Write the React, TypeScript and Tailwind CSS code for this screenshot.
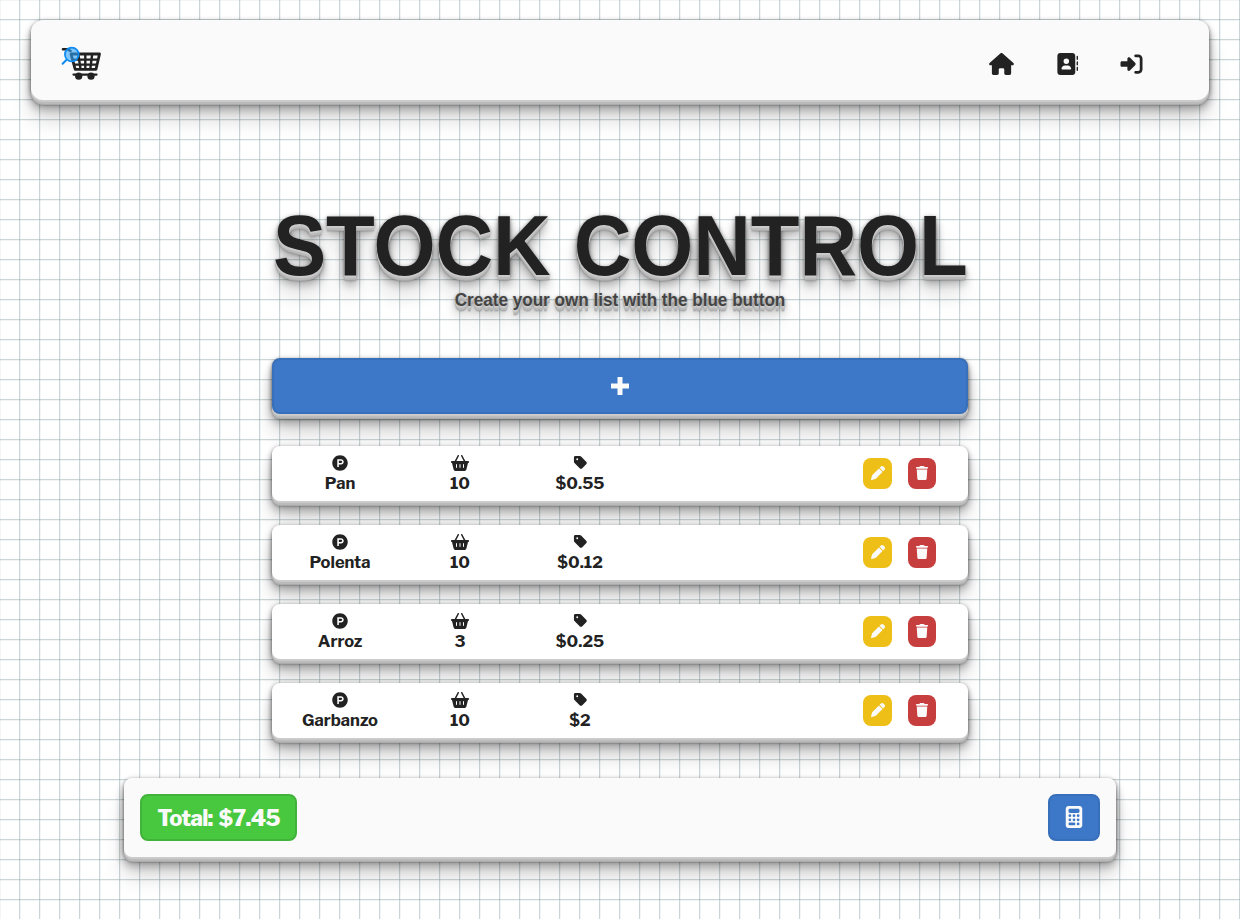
import type { ReactNode } from "react";
import {
  FaHouse,
  FaAddressBook,
  FaRightToBracket,
  FaProductHunt,
  FaBasketShopping,
  FaTag,
  FaPen,
  FaTrash,
  FaCalculator,
} from "react-icons/fa6";

const raised =
  "shadow-[0_1px_0_#ccc,0_2px_0_#c9c9c9,0_3px_0_#bbb,0_4px_0_#b9b9b9,0_5px_0_#aaa,0_6px_1px_rgba(0,0,0,0.1),0_0_5px_rgba(0,0,0,0.1),0_1px_3px_rgba(0,0,0,0.3),0_3px_5px_rgba(0,0,0,0.2),0_5px_10px_rgba(0,0,0,0.25),0_10px_10px_rgba(0,0,0,0.2),0_20px_20px_rgba(0,0,0,0.15)]";
const raisedText =
  "[text-shadow:0_1px_0_#ccc,0_2px_0_#c9c9c9,0_3px_0_#bbb,0_4px_0_#b9b9b9,0_5px_0_#aaa,0_6px_1px_rgba(0,0,0,0.1),0_0_5px_rgba(0,0,0,0.1),0_1px_3px_rgba(0,0,0,0.3),0_3px_5px_rgba(0,0,0,0.2),0_5px_10px_rgba(0,0,0,0.25),0_10px_10px_rgba(0,0,0,0.2),0_20px_20px_rgba(0,0,0,0.15)]";

const products = [
  { name: "Pan", quantity: "10", price: "$0.55" },
  { name: "Polenta", quantity: "10", price: "$0.12" },
  { name: "Arroz", quantity: "3", price: "$0.25" },
  { name: "Garbanzo", quantity: "10", price: "$2" },
];

function Logo() {
  return (
    <svg className="h-[40px] w-[44px]" viewBox="0 0 44 40" fill="none">
      <path d="M3 9.3H8L10.5 11" stroke="#222" strokeWidth="2.6" strokeLinecap="round" />
      <path d="M11 14H39.5L36 29.3H15.2Z" stroke="#222" strokeWidth="2.8" strokeLinejoin="round" />
      <path d="M12.5 19.6H38M14 24.6H37M18.3 14l2.2 15M25.3 14v15M32.2 14l-1.9 15" stroke="#222" strokeWidth="2.4" />
      <path d="M13.5 34.6H36.5" stroke="#222" strokeWidth="2.2" strokeLinecap="round" />
      <circle cx="18.7" cy="36.2" r="3.6" fill="#222" />
      <circle cx="31" cy="36.2" r="3.6" fill="#222" />
      <path d="M6.6 19.8 2.6 23.8" stroke="#0d8bf2" strokeWidth="2" strokeLinecap="round" />
      <circle cx="11.8" cy="14.6" r="6.9" fill="#2ea3fb" fillOpacity="0.6" stroke="#0d8bf2" strokeWidth="1.7" />
    </svg>
  );
}

function Field({ icon, text }: { icon: ReactNode; text: string }) {
  return (
    <div className="flex w-[120px] flex-col items-center">
      <div className="flex h-4 items-center text-base">{icon}</div>
      <span className="mt-[2px] text-[16.5px] leading-5 tabular-nums">{text}</span>
    </div>
  );
}

export default function App() {
  return (
    <div className="flex h-[919px] w-[1240px] flex-col items-center bg-white bg-[linear-gradient(rgba(150,172,175,0.5)_1px,rgba(150,172,175,0.12)_1px,rgba(150,172,175,0.12)_2px,transparent_2px),linear-gradient(90deg,rgba(150,172,175,0.5)_1px,rgba(150,172,175,0.12)_1px,rgba(150,172,175,0.12)_2px,transparent_2px)] bg-size-[20px_20px] bg-position-[-1px_-1px] pt-5 font-['Libre_Franklin','Liberation_Sans',sans-serif] font-bold text-[#222]">
      <header className={`flex h-20 w-[1178px] shrink-0 items-center rounded-xl bg-[#fafafa] pr-[66px] pl-[29px] ${raised}`}>
        <Logo />
        <nav className="ml-auto flex items-center pt-2 text-[22px]">
          <a className="mr-[42px]"><FaHouse className="h-[22px] w-[25px]" /></a>
          <a className="mr-[42px]"><FaAddressBook /></a>
          <a><FaRightToBracket className="w-[23px]" /></a>
        </nav>
      </header>

      <main className="mt-[104px] flex w-[696px] shrink-0 flex-col items-center font-['Liberation_Sans',sans-serif]">
        <h1 className={`scale-x-[0.938] pl-px text-[85px] leading-[84px] whitespace-nowrap [word-spacing:1px] ${raisedText}`}>STOCK CONTROL</h1>
        <p className={`mt-[2px] scale-x-[0.95] text-[18px] leading-5 whitespace-nowrap text-[#444] ${raisedText}`}>
          Create your own list with the blue button
        </p>
        <button className={`mt-12 flex h-14 w-full items-center justify-center rounded-lg border-2 border-[#386fba] bg-[#3d77c7] ${raised}`}>
          <svg className="size-[18px]" viewBox="0 0 18 18" fill="#fafafa">
            <path d="M6.5 0h5v6.5H18v5h-6.5V18h-5v-6.5H0v-5h6.5z" />
          </svg>
        </button>
      </main>

      <ul className="mt-8 flex w-[696px] shrink-0 flex-col gap-6">
        {products.map((p) => (
          <li key={p.name} className={`flex h-[55px] items-center rounded-lg bg-white pr-8 pl-2 ${raised}`}>
            <Field icon={<FaProductHunt />} text={p.name} />
            <Field icon={<FaBasketShopping className="w-[18px]" />} text={p.quantity} />
            <Field icon={<FaTag className="size-[15px]" />} text={p.price} />
            <div className="ml-auto flex gap-4 text-sm text-[#fafafa]">
              <button className="flex h-[31px] w-[29px] items-center justify-center rounded-lg bg-[#eebf17] pb-px"><FaPen /></button>
              <button className="flex h-[31px] w-7 items-center justify-center rounded-lg bg-[#c73e3e] pb-px"><FaTrash /></button>
            </div>
          </li>
        ))}
      </ul>

      <footer className={`mt-10 flex h-[79px] w-[992px] shrink-0 items-start justify-between rounded-lg bg-[#fafafa] p-4 ${raised}`}>
        <div className="flex h-[47px] w-[157px] items-center justify-center rounded-lg border-2 border-[#41b33a] bg-[#48c83f] pt-[2px] text-[22px] font-extrabold tracking-[-0.7px] text-[#fafafa] [word-spacing:2px]">
          Total: $7.45
        </div>
        <button className="flex h-[47px] w-[52px] items-center justify-center rounded-lg border-2 border-[#386fba] bg-[#3d77c7] pb-px text-[22px] text-[#fafafa]">
          <FaCalculator />
        </button>
      </footer>
    </div>
  );
}
